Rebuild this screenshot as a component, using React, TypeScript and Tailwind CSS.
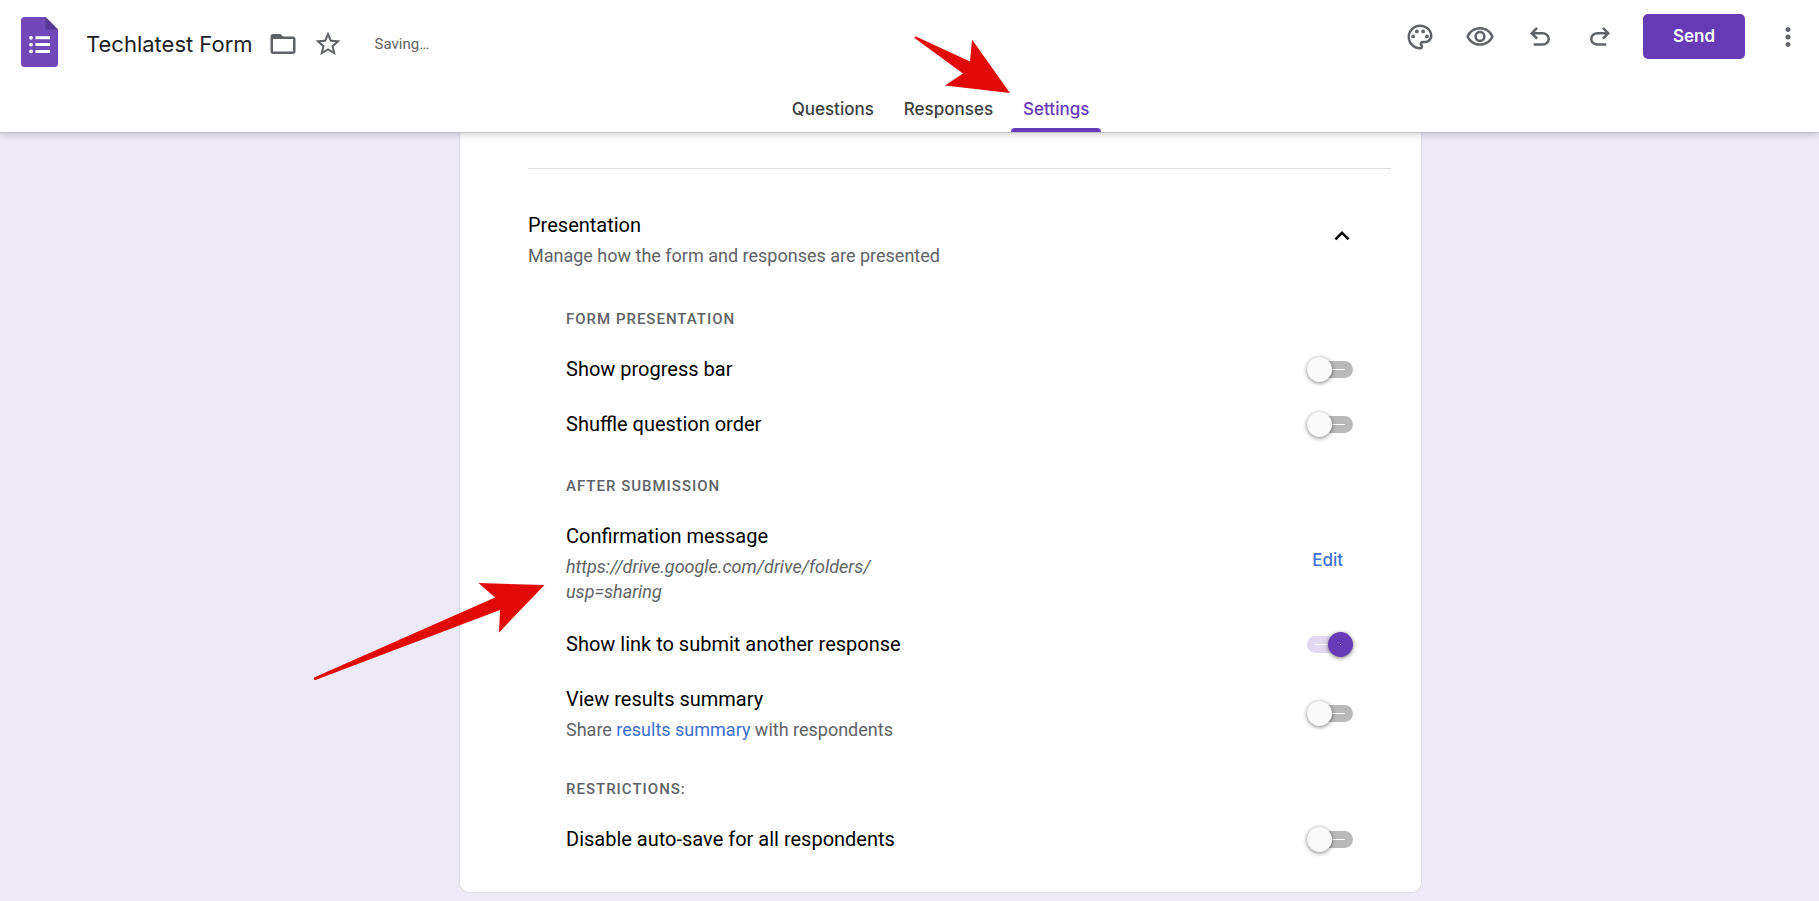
import React, { useState } from 'react';
import {
  MdFolderOpen,
  MdKeyboardArrowUp,
  MdMoreVert,
  MdOutlinePalette,
  MdOutlineVisibility,
  MdStarBorder,
} from 'react-icons/md';

interface IconButtonProps {
  label: string;
  children: React.ReactNode;
}

const IconButton: React.FC<IconButtonProps> = ({ label, children }) => (
  <button type="button" aria-label={label} className="flex h-[30px] w-[30px] items-center justify-center text-[30px] text-[#5f6368]">
    {children}
  </button>
);

const FormsLogo: React.FC = () => (
  <svg viewBox="0 0 37 50" className="h-[50px] w-[37px]" aria-hidden="true">
    <path d="M3.5 0H24.5L37 12.5V46.5A3.5 3.5 0 0 1 33.5 50H3.5A3.5 3.5 0 0 1 0 46.5V3.5A3.5 3.5 0 0 1 3.5 0Z" fill="#7248b9" />
    <path d="M24.5 0L37 12.5H24.5Z" fill="#583894" />
    <g fill="#fff">
      <circle cx="10" cy="20.8" r="1.9" />
      <circle cx="10" cy="27.6" r="1.9" />
      <circle cx="10" cy="34.4" r="1.9" />
      <path d="M14.5 19.3H29V22.3H14.5ZM14.5 26.1H29V29.1H14.5ZM14.5 32.9H29V35.9H14.5Z" />
    </g>
  </svg>
);

const UndoIcon: React.FC<{ flipped?: boolean }> = ({ flipped }) => (
  <svg viewBox="0 0 24 24" className={flipped ? 'h-[30px] w-[30px] -scale-x-100' : 'h-[30px] w-[30px]'} fill="currentColor" aria-hidden="true">
    <path d="M7 19v-2h7.1q1.575 0 2.738-1T18 13.5t-1.162-2.5T14.1 10H7.8l2.6 2.6L9 14 4 9l5-5 1.4 1.4L7.8 8h6.3q2.425 0 4.163 1.575T20 13.5t-1.737 3.925T14.1 19z" />
  </svg>
);

interface ToggleProps {
  id: string;
  defaultChecked?: boolean;
}

const Toggle: React.FC<ToggleProps> = ({ id, defaultChecked = false }) => {
  const [checked, setChecked] = useState(defaultChecked);

  return (
    <span className="relative flex h-[25px] w-[46px] shrink-0 items-center">
      <input
        id={id}
        type="checkbox"
        role="switch"
        checked={checked}
        onChange={(e) => setChecked(e.target.checked)}
        className="absolute inset-0 z-10 h-full w-full cursor-pointer opacity-0"
      />
      <span className={`flex h-[17px] w-full items-center rounded-full px-2 ${checked ? 'bg-[#e1d8f1]' : 'bg-[#b9b9b9]'}`}>
        <span className="h-px w-full bg-white" />
      </span>
      <span
        className={`absolute top-0 flex h-[25px] w-[25px] items-center justify-center rounded-full shadow-[0_1px_4px_rgba(0,0,0,0.5)] ${
          checked ? 'right-0 bg-[#673ab7]' : 'left-0 bg-[#fafafa]'
        }`}
      >
        <span className="h-px w-px bg-white" />
      </span>
    </span>
  );
};

interface SettingRowProps {
  title: string;
  id?: string;
  defaultChecked?: boolean;
  action?: React.ReactNode;
  children?: React.ReactNode;
}

const SettingRow: React.FC<SettingRowProps> = ({ title, id, defaultChecked, action, children }) => (
  <div className="flex items-center justify-between py-[13px]">
    <div>
      {id ? (
        <label htmlFor={id} className="block text-[20px] leading-[29px] text-black">{title}</label>
      ) : (
        <h4 className="text-[20px] leading-[29px] text-black">{title}</h4>
      )}
      {children}
    </div>
    {id ? <Toggle id={id} defaultChecked={defaultChecked} /> : action}
  </div>
);

interface SettingGroupProps {
  title: string;
  children: React.ReactNode;
}

const SettingGroup: React.FC<SettingGroupProps> = ({ title, children }) => (
  <section>
    <h3 className="mb-[13px] text-[15px] leading-5 font-medium tracking-[1px] text-[#5f6368] uppercase">{title}</h3>
    {children}
  </section>
);

const tabs = ['Questions', 'Responses', 'Settings'];

const Header: React.FC = () => (
  <header className="relative z-10 border-b border-[#c3c1c8] bg-white shadow-[0_1px_8px_rgba(0,0,0,0.2)]">
    <div className="flex h-[88px] items-start justify-between pr-4 pl-[21px]">
      <div className="flex items-start pt-[17px]">
        <FormsLogo />
        <div className="flex items-center pt-3">
          <h1 className="ml-7 font-['Inter','Liberation_Sans',sans-serif] text-[22px] leading-[30px] text-[#202124]">Techlatest Form</h1>
          <div className="ml-[15px] flex gap-[15px]">
            <IconButton label="Move to folder"><MdFolderOpen /></IconButton>
            <IconButton label="Star"><MdStarBorder /></IconButton>
          </div>
          <span className="ml-8 text-[15px] text-[#5f6368]">Saving…</span>
        </div>
      </div>
      <div className="flex items-center gap-7 pt-[14px]">
        <div className="flex items-center gap-[30px]">
          <IconButton label="Customize theme"><MdOutlinePalette /></IconButton>
          <IconButton label="Preview"><MdOutlineVisibility /></IconButton>
          <IconButton label="Undo"><UndoIcon /></IconButton>
          <IconButton label="Redo"><UndoIcon flipped /></IconButton>
        </div>
        <button type="button" className="h-[45px] w-[102px] rounded-[5px] bg-[#673ab7] font-['Inter','Liberation_Sans',sans-serif] text-[17px] font-semibold text-white">
          Send
        </button>
        <IconButton label="More options"><MdMoreVert /></IconButton>
      </div>
    </div>
    <nav className="flex h-11 justify-center gap-[6px] pl-[62px]">
      {tabs.map((tab) => (
        <button
          key={tab}
          type="button"
          className={`relative px-3 font-['Inter','Liberation_Sans',sans-serif] text-[17px] font-medium ${
            tab === 'Settings' ? 'text-[#673ab7]' : 'text-[#3c4043]'
          }`}
        >
          {tab}
          {tab === 'Settings' && <span className="absolute inset-x-0 bottom-0 h-1 rounded-t bg-[#673ab7]" />}
        </button>
      ))}
    </nav>
  </header>
);

const App: React.FC = () => {
  return (
    <div className="relative min-h-screen overflow-hidden bg-[#efeaf8] font-['Roboto','Liberation_Sans',sans-serif]">
      <Header />
      <main className="pb-2 pl-[62px]">
        <div className="mx-auto w-full max-w-[963px] rounded-b-[10px] border border-t-0 border-[#dadce0] bg-white pt-[35px] pr-[30px] pb-[25px] pl-[68px]">
          <hr className="border-[#dadce0]" />
          <div className="flex items-start justify-between pt-[42px] pr-[34px] pb-[41px]">
            <div>
              <h2 className="text-[20px] leading-[29px] text-black">Presentation</h2>
              <p className="mt-[3px] text-[18px] leading-[25px] text-[#5f6368]">Manage how the form and responses are presented</p>
            </div>
            <button type="button" aria-label="Collapse presentation settings" className="pt-[10px] text-[30px] text-black">
              <MdKeyboardArrowUp />
            </button>
          </div>

          <div className="flex flex-col gap-6 pr-[38px] pl-[38px]">
            <SettingGroup title="Form presentation">
              <SettingRow id="progress-bar" title="Show progress bar" />
              <SettingRow id="shuffle-order" title="Shuffle question order" />
            </SettingGroup>

            <SettingGroup title="After submission">
              <SettingRow
                title="Confirmation message"
                action={
                  <button type="button" className="px-[10px] pb-1 font-['Inter','Liberation_Sans',sans-serif] text-[17px] font-medium text-[#3c6fd1]">
                    Edit
                  </button>
                }
              >
                <p className="mt-[3px] text-[18px] leading-[25px] text-[#5f6368] italic">
                  https://drive.google.com/drive/folders/
                  <br />
                  usp=sharing
                </p>
              </SettingRow>
              <SettingRow id="submit-another" title="Show link to submit another response" defaultChecked />
              <SettingRow id="results-summary" title="View results summary">
                <p className="mt-[3px] text-[18px] leading-[25px] text-[#5f6368]">
                  Share <a href="#results" className="text-[#3c6fd1]">results summary</a> with respondents
                </p>
              </SettingRow>
            </SettingGroup>

            <SettingGroup title="Restrictions:">
              <SettingRow id="disable-autosave" title="Disable auto-save for all respondents" />
            </SettingGroup>
          </div>
        </div>
      </main>

      {/* callout arrows, drawn over the page */}
      <svg viewBox="0 0 97 58" className="pointer-events-none absolute top-9 left-[914px] z-20 h-[58px] w-[97px]" aria-hidden="true">
        <path d="M2 0.5L56 25.5L58 3.5L96 57L31 49.5L49 37.5L0.5 2Q0.5 0.3 2 0.5Z" fill="#e10a08" />
      </svg>
      <svg viewBox="0 0 232 98" className="pointer-events-none absolute top-[583px] left-[313px] z-20 h-[98px] w-[232px]" aria-hidden="true">
        <path d="M1 94.5L182 14.5L165.5 0L231.5 2L186 49.5L187 27L2.5 97Q0.5 97 1 94.5Z" fill="#e10a08" />
      </svg>
    </div>
  );
};

export default App;
